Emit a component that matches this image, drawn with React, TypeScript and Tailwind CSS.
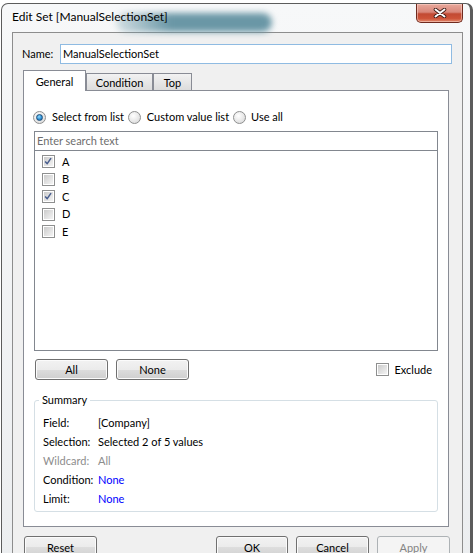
import React from 'react'

const grayBtn =
  'flex items-center justify-center rounded-[3px] border border-[#707070] bg-[linear-gradient(to_bottom,#f2f2f2_0%,#ebebeb_50%,#dddddd_50%,#cfcfcf_100%)] shadow-[inset_0_0_0_1px_#fbfbfb] text-black'

function Radio({ checked }: { checked?: boolean }) {
  return (
    <span className="flex size-[13px] shrink-0 items-center justify-center rounded-full border border-[#8e8f8f] bg-[radial-gradient(circle_at_40%_35%,#ffffff,#d4d4d4)]">
      {checked && (
        <span className="size-[7px] rounded-full border border-[#1d4f7a] bg-[radial-gradient(circle_at_40%_35%,#8fdcff,#2b8ad0_60%,#125ea0)]" />
      )}
    </span>
  )
}

function Check({ checked }: { checked?: boolean }) {
  return (
    <span className="relative flex size-[13px] shrink-0 items-center justify-center border border-[#8e8f8f] bg-white">
      <span className="size-[9px] bg-[linear-gradient(135deg,#cbcbcb,#f4f4f4)]" />
      {checked && (
        <svg viewBox="0 0 13 13" className="absolute inset-0 size-[11px]">
          <path d="M2.5 6.5 L5 9 L9.5 2.5" fill="none" stroke="#4a5f8f" strokeWidth="1.8" strokeLinejoin="round" />
        </svg>
      )}
    </span>
  )
}

const items = [
  { label: 'A', checked: true },
  { label: 'B', checked: false },
  { label: 'C', checked: true },
  { label: 'D', checked: false },
  { label: 'E', checked: false },
]

const summary = [
  { label: 'Field:', value: '[Company]', tone: 'text-black', lab: 'text-black' },
  { label: 'Selection:', value: 'Selected 2 of 5 values', tone: 'text-black', lab: 'text-black' },
  { label: 'Wildcard:', value: 'All', tone: 'text-[#8d8d8d]', lab: 'text-[#8d8d8d]' },
  { label: 'Condition:', value: 'None', tone: 'text-[#0000ff]', lab: 'text-black' },
  { label: 'Limit:', value: 'None', tone: 'text-[#0000ff]', lab: 'text-black' },
]

export default function App() {
  return (
    <div className="h-[553px] w-[474px] overflow-hidden bg-white pl-px pt-[3px] font-[Lato,'Open_Sans',sans-serif] text-[11px] leading-[16px] text-black">
      <div className="flex h-[560px] w-[472px] flex-col rounded-t-[7px] border border-r-[3px] border-[#5c5c5c] bg-[linear-gradient(to_bottom,#f7f8f9,#eceef0)]">
        {/* title bar */}
        <div className="relative flex h-[28px] items-start">
          <div className="absolute left-[114px] top-[9px] h-[19px] w-[156px] rounded-full bg-[linear-gradient(to_right,rgba(108,152,166,0.25),#6a97a6_35%,#6a97a6)] blur-[3px]" />
          <span className="relative pl-[10px] pt-[5px] text-[12px]">Edit Set [ManualSelectionSet]</span>
          <div className="ml-auto mr-[7px] flex h-[19px] w-[47px] items-center justify-center rounded-b-[5px] border border-t-0 border-[#6f2a1f] bg-[linear-gradient(to_bottom,#e9a99c_0%,#d9877a_45%,#c24a33_55%,#cd5338_80%,#e28a6e_100%)] shadow-[inset_0_0_0_1px_rgba(255,220,210,0.5)]">
            <svg viewBox="0 0 14 10" className="h-[10px] w-[14px]">
              <path d="M2.5 1.5 L11.5 8.5 M11.5 1.5 L2.5 8.5" stroke="#3b1a14" strokeWidth="3.6" strokeLinecap="round" />
              <path d="M2.5 1.5 L11.5 8.5 M11.5 1.5 L2.5 8.5" stroke="#ffffff" strokeWidth="2" strokeLinecap="round" />
            </svg>
          </div>
        </div>

        {/* client area */}
        <div className="ml-[10px] w-[451px] flex-1 border border-[#8d8d8d] bg-[#f0f0f0]">
          <div className="mt-[11px] flex h-[20px] items-center pl-[9px]">
            <span className="w-[38px]">Name:</span>
            <div className="flex h-[20px] w-[392px] items-center border border-[#8fbbe2] bg-white pl-[2px]">
              ManualSelectionSet
            </div>
          </div>

          {/* tabs */}
          <div className="mt-[6px] flex h-[20px] items-end pl-[10px]">
            <div className="relative z-10 -mb-px flex h-[21px] w-[63px] justify-center border border-b-0 border-[#898c95] bg-white pt-[3px]">
              General
            </div>
            <div className="flex h-[17px] w-[67px] justify-center border border-b-0 border-[#898c95] bg-[linear-gradient(to_bottom,#f2f2f2,#dcdcdc)] pt-px">
              Condition
            </div>
            <div className="flex h-[17px] w-[39px] justify-center border border-b-0 border-[#898c95] bg-[linear-gradient(to_bottom,#f2f2f2,#dcdcdc)] pt-px">
              Top
            </div>
          </div>

          <div className="ml-[10px] h-[437px] w-[426px] border border-[#898c95] bg-white">
            <div className="ml-[9px] mt-[18px] flex h-[16px] items-center">
              <label className="flex items-center gap-[6px]">
                <Radio checked />
                Select from list
              </label>
              <label className="ml-[4px] flex items-center gap-[6px]">
                <Radio />
                Custom value list
              </label>
              <label className="ml-[4px] flex items-center gap-[5px]">
                <Radio />
                Use all
              </label>
            </div>

            <div className="ml-[10px] mt-[6px] flex h-[20px] w-[404px] items-center border border-[#82878f] pl-[2px] text-[#6d6d6d]">
              Enter search text
            </div>
            <div className="ml-[10px] h-[200px] w-[404px] border border-t-0 border-[#82878f] pt-[2px]">
              {items.map((it) => (
                <div key={it.label} className="flex h-[17.5px] items-center gap-[7px] pl-[7px]">
                  <Check checked={it.checked} />
                  {it.label}
                </div>
              ))}
            </div>

            <div className="ml-[11px] mt-[8px] flex items-center">
              <div className={`${grayBtn} h-[21px] w-[73px]`}>All</div>
              <div className={`${grayBtn} ml-[8px] h-[21px] w-[73px]`}>None</div>
              <label className="ml-auto mr-[16px] flex items-center gap-[5px]">
                <Check />
                Exclude
              </label>
            </div>

            <fieldset className="ml-[10px] mt-[12px] w-[404px] rounded-[3px] border border-[#d5dfe5] pb-[3px] pl-[4px]">
              <legend className="px-[3px]">Summary</legend>
              <div className="pt-[5px]">
                {summary.map((r) => (
                  <div key={r.label} className="grid h-[19px] grid-cols-[55px_1fr] items-center pl-[4px]">
                    <span className={r.lab}>{r.label}</span>
                    <span className={r.tone}>{r.value}</span>
                  </div>
                ))}
              </div>
            </fieldset>
          </div>

          {/* dialog buttons */}
          <div className="ml-[11px] mt-[9px] flex">
            <div className={`${grayBtn} h-[23px] w-[73px]`}>Reset</div>
            <div className={`${grayBtn} ml-[119px] h-[23px] w-[72px] border-[#3c7fb1] shadow-[inset_0_0_0_1px_#bfe4f8]`}>OK</div>
            <div className={`${grayBtn} ml-[8px] h-[23px] w-[73px]`}>Cancel</div>
            <div className="ml-[8px] flex h-[23px] w-[73px] items-center justify-center rounded-[3px] border border-[#adb2b5] bg-[#f4f4f4] text-[#838383]">
              Apply
            </div>
          </div>
        </div>
      </div>
    </div>
  )
}
